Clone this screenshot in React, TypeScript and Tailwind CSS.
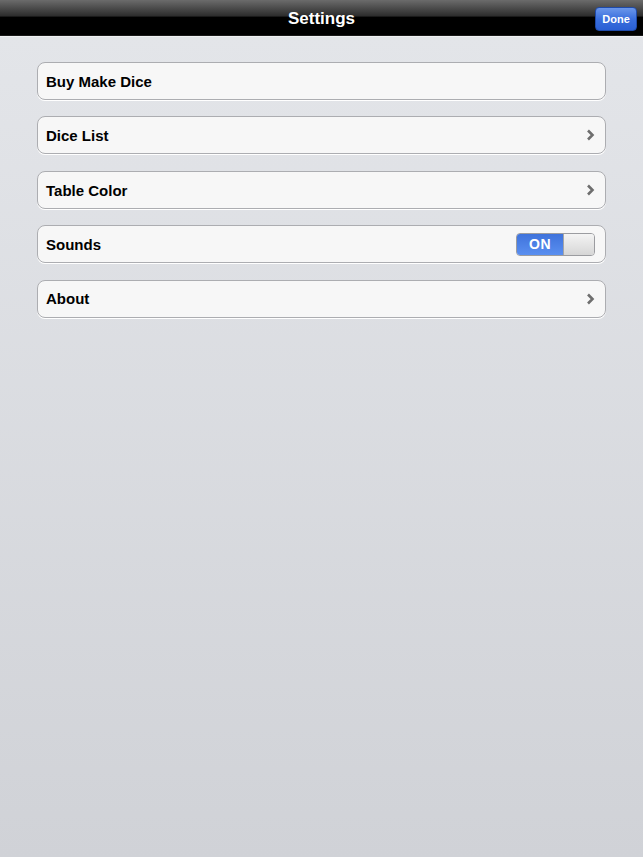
import React from "react";

const Chevron = () => (
  <svg width="9" height="12" viewBox="0 0 9 12" className="mr-[1px]">
    <path d="M2 1.5 L6.5 6 L2 10.5" stroke="#6e6e6e" strokeWidth="2.6" fill="none" strokeLinecap="butt" strokeLinejoin="miter" />
  </svg>
);

const Row = ({ label, right }: { label: string; right?: React.ReactNode }) => (
  <div className="h-[38px] rounded-[8px] border border-[#acadb1] bg-[#f7f7f7] flex items-center justify-between pl-[8px] pr-[9px] shadow-[0_1px_0_#ffffff]">
    <span className="text-[15px] font-bold text-black pt-[2px]">{label}</span>
    {right}
  </div>
);

export default function App() {
  return (
    <div className="w-[643px] h-[857px] flex flex-col" style={{ fontFamily: "Helvetica, 'Liberation Sans', Arial, sans-serif" }}>
      <div className="h-[36px] relative flex items-center justify-center bg-[linear-gradient(#6b6b6b_0%,#2d2d2d_45%,#000000_50%,#000000_100%)] border-b border-[#1a1a1a]">
        <span className="text-white text-[17px] font-bold pt-[2px]">Settings</span>
        <div className="absolute right-[6px] top-[7px] h-[24px] w-[42px] rounded-[4px] bg-[linear-gradient(#6a96ea_0%,#3a6fdd_50%,#2a5fd4_100%)] border border-[#1f4aa8] flex items-center justify-center">
          <span className="text-white text-[11px] font-bold">Done</span>
        </div>
      </div>
      <div className="h-[1px] bg-[#f1f2f4]" />
      <div className="flex-1 bg-[linear-gradient(#e3e5e9,#d0d2d7)] px-[37px] pt-[25px] flex flex-col gap-[16.4px]">
        <Row label="Buy Make Dice" />
        <Row label="Dice List" right={<Chevron />} />
        <Row label="Table Color" right={<Chevron />} />
        <Row
          label="Sounds"
          right={
            <div className="flex h-[23px] w-[79px] rounded-[4px] border border-[#9b9ca0] overflow-hidden mr-[1px]">
              <div className="w-[46px] bg-[linear-gradient(#3f73dc,#5a8ff0)] flex items-center justify-center">
                <span className="text-white text-[14px] font-bold tracking-[0.5px] pt-[1px]">ON</span>
              </div>
              <div className="flex-1 bg-[linear-gradient(#f4f4f4,#d6d6d6)] border-l border-[#a5a5a5]" />
            </div>
          }
        />
        <Row label="About" right={<Chevron />} />
      </div>
    </div>
  );
}
